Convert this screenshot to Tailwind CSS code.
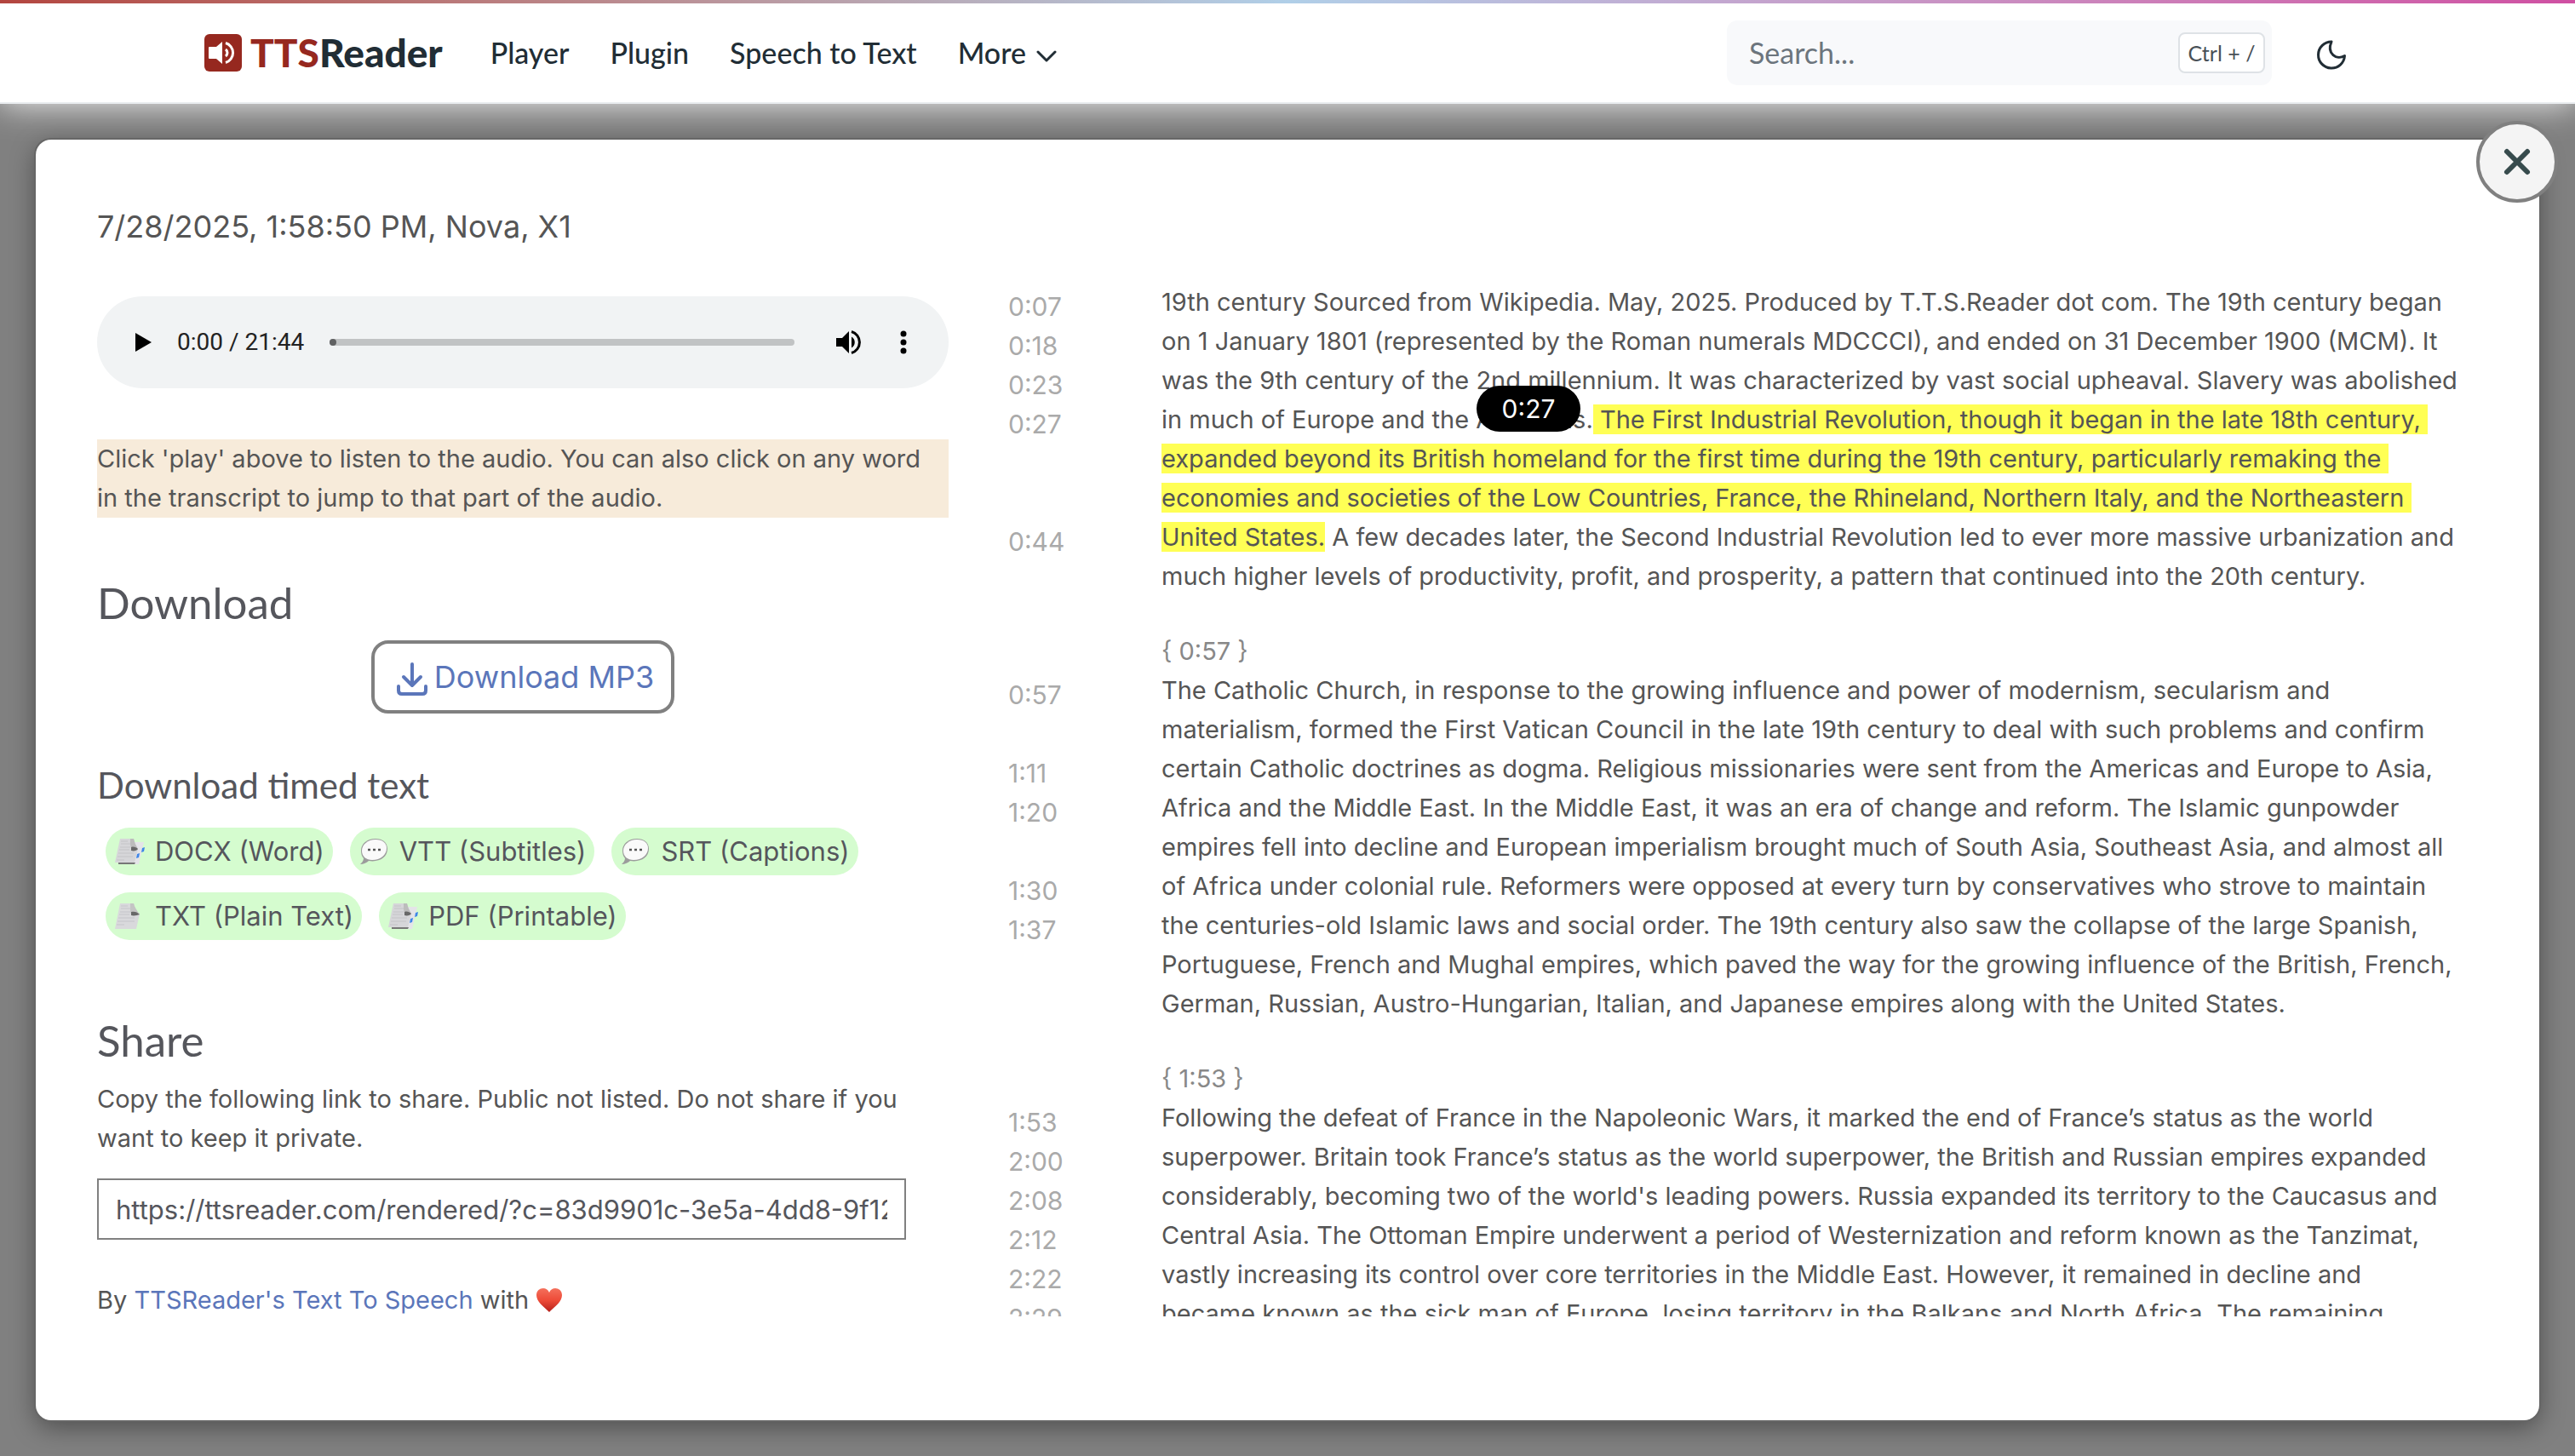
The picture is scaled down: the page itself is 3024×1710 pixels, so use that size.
<!DOCTYPE html>
<html lang="en">
<head>
    <meta charset="UTF-8">
    <meta name="viewport" content="width=device-width, initial-scale=1.0">
    <title>TTSReader</title>
    <script src="https://cdn.jsdelivr.net/npm/@tailwindcss/browser@4"></script>
</head>
<body class="flex h-screen flex-col overflow-hidden bg-[#808080] font-['Inter',sans-serif] text-[29px] leading-[46px] text-[#555]">
    <svg class="hidden">
        <symbol id="page" viewBox="0 0 36 32">
            <path d="M7 1h16l2 8 5 4-4 18H1L7 1z" fill="#d9d9dc"/>
            <path d="M8 4h8M8 7h12M7 11h12M6 14h12M5 18h19M4 22h20M3 26h9" stroke="#c6c6ca" stroke-width="1.2"/>
            <path d="M19 1h4c1 4 3 7 7 13-4-2-7-1-10 0l-1-4z" fill="#c4c4c4"/>
            <path d="M20 11c4-1 7 0 10 3-3 1-7 2-10 1z" fill="#686868"/>
        </symbol>
        <symbol id="pages" viewBox="0 0 36 32">
            <path d="M14 5h21l-6 26H5l9-26z" fill="#e4e4e8"/>
            <path d="M33 12l3-1-1 5-3 1zM27 19l3-1-1 5-3 1z" fill="#3f86e8"/>
            <path d="M5 29h20l-1 2H5z" fill="#777"/>
            <path d="M7 1h16l2 8 3 4-4 16H1L7 1z" fill="#d6d6d9"/>
            <path d="M8 4h8M8 7h12M7 11h12M6 14h12M5 18h18M4 22h18M3 26h9" stroke="#c4c4c8" stroke-width="1.2"/>
            <path d="M19 1h4c1 4 2 7 5 12-3-2-6-2-8-1l-1-4z" fill="#bcbcbc"/>
            <path d="M20 11c3-1 6 0 8 2-1 2-5 3-8 2z" fill="#686868"/>
        </symbol>
        <symbol id="bubble" viewBox="0 0 36 32">
            <path d="M20 1C10 1 3 7 3 15c0 4 1 7 3 9 0 3-2 5-4 7 4 0 8-2 10-4 12 2 22-4 22-14C34 5 28 1 20 1z" fill="#9c9c9c"/>
            <path d="M20 2C11 2 4 8 4 15c0 7 5 11 12 11 10 0 17-6 17-14C33 6 28 2 20 2z" fill="#fafafa"/>
            <path d="M11 14h3M17 14h3M23 14h3" stroke="#555" stroke-width="2.4"/>
        </symbol>
    </svg>

    <header class="relative z-10 h-[122px] shrink-0 border-b-2 border-[#e9ecef] bg-white shadow-[0_0_36px_rgba(255,255,255,0.9)]">
        <div class="h-1 bg-linear-to-r from-[#b3453f] via-[#b0cfe8] to-[#cf4fa2]"></div>
        <div class="flex h-[116px] items-center px-60 font-['Lato',sans-serif] text-[#212d35]">
            <a href="#" class="flex items-center gap-[10px] text-[46px] font-black">
                <svg class="size-11" viewBox="0 0 44 44">
                    <rect width="44" height="44" rx="6" fill="#96281f"/>
                    <path d="M5 16q0-1 1-1h8l7-6v26l-7-6H6q-1 0-1-1z" fill="#fff"/>
                    <path d="M25 18a5 5 0 0 1 0 8M25 10.500a12 12 0 0 1 0 23" fill="none" stroke="#fff" stroke-width="3"/>
                </svg>
                <span><span class="text-[#96281f]">TTS</span>Reader</span>
            </a>
            <nav class="ml-14 flex items-center gap-12 text-[34px] font-medium">
                <a href="#">Player</a>
                <a href="#">Plugin</a>
                <a href="#">Speech to Text</a>
                <a href="#" class="flex items-center gap-3">More
                    <svg class="mt-2 h-4 w-6" viewBox="0 0 24 16" fill="none" stroke="currentColor" stroke-width="3" stroke-linecap="round" stroke-linejoin="round"><path d="M2 3l10 10L22 3"/></svg>
                </a>
            </nav>
            <div class="ml-auto flex h-[76px] w-[640px] items-center rounded-xl bg-[#f8f9fb] pr-2">
                <input type="search" aria-label="Search" placeholder="Search..." class="min-w-0 flex-1 bg-transparent pl-[26px] text-[34px] outline-none placeholder:text-[#6c757d]">
                <kbd class="flex h-12 w-[102px] items-center justify-center rounded-lg border-2 border-[#dee2e6] bg-white font-['Lato',sans-serif] text-[25px] text-[#495057]">Ctrl + /</kbd>
            </div>
            <button type="button" aria-label="Toggle dark mode" class="mt-1 mr-7 ml-[52px]">
                <svg class="size-9" viewBox="0 0 36 36" fill="none" stroke="currentColor" stroke-width="3" stroke-linejoin="round"><path d="M18 3A15.500 15.500 0 1 0 33.500 19.500C24 25 12 17 18 3z"/></svg>
            </button>
        </div>
    </header>

    <main class="flex min-h-0 flex-1 p-[42px]">
        <section class="relative flex min-h-0 flex-1 flex-col rounded-[18px] bg-white px-[72px] pt-[72px] pb-[122px] shadow-[0_0_0_2px_#666,0_8px_30px_rgba(0,0,0,0.4)]">
            <button type="button" aria-label="Close" class="absolute -top-[22px] -right-[22px] z-20 flex size-24 items-center justify-center rounded-full border-4 border-[#808080] bg-[#f4f4f4]">
                <svg class="size-9" viewBox="0 0 36 36" stroke="#374b4d" stroke-width="6" stroke-linecap="round"><path d="M6 6l24 24M30 6L6 30"/></svg>
            </button>
            <h1 class="text-[36px] leading-[60px]">7/28/2025, 1:58:50 PM, Nova, X1</h1>

            <div class="mt-9 grid min-h-0 flex-1 grid-cols-[1000px_180px_1fr] grid-rows-[100%]">
                <div class="pt-4">
                    <div class="flex h-[108px] items-center rounded-full bg-[#f1f3f4] font-['Roboto',sans-serif] text-[28px] text-[#222]">
                        <button type="button" aria-label="Play" class="ml-[45px]">
                            <svg class="h-6 w-5" viewBox="0 0 20 24"><path d="M0 1l19 11L0 23z" fill="#000"/></svg>
                        </button>
                        <span class="ml-[29px]">0:00 / 21:44</span>
                        <input type="range" aria-label="Position" value="0" class="ml-[30px] h-2 w-[546px] appearance-none rounded-full bg-[#c1c3c4] [&::-webkit-slider-thumb]:size-2 [&::-webkit-slider-thumb]:appearance-none [&::-webkit-slider-thumb]:rounded-full [&::-webkit-slider-thumb]:bg-[#606162]">
                        <button type="button" aria-label="Mute" class="ml-12">
                            <svg class="h-8 w-8" viewBox="0 0 32 32"><path d="M1 11v10h7l8 8V3l-8 8z" fill="#000"/><path d="M19 9.500a7.500 7.500 0 0 1 0 13z" fill="#000"/><path d="M19 3.500a13 13 0 0 1 0 25" fill="none" stroke="#000" stroke-width="3"/></svg>
                        </button>
                        <button type="button" aria-label="More options" class="ml-11">
                            <svg class="h-8 w-2" viewBox="0 0 8 32"><circle cx="4" cy="6" r="3.500"/><circle cx="4" cy="16" r="3.500"/><circle cx="4" cy="26" r="3.500"/></svg>
                        </button>
                    </div>
                    <p class="mt-[60px] bg-[#f7ebda]">Click 'play' above to listen to the audio. You can also click on any word<br>in the transcript to jump to that part of the audio.</p>

                    <h2 class="mt-[70px] font-['Lato',sans-serif] text-[51px] leading-[60px] text-[#55565c]">Download</h2>
                    <div class="mt-[14px] flex justify-center">
                        <a href="#" class="flex h-[86px] items-center gap-2 rounded-[20px] border-4 border-[#808080] pr-5 pl-[26px] text-[36px] text-[#5b76ba]">
                            <svg class="mt-1 h-10 w-9" viewBox="0 0 36 40" fill="none" stroke="currentColor" stroke-width="4" stroke-linecap="round" stroke-linejoin="round"><path d="M18 3v24M8 18l10 10 10-10M2 29v5q0 4 4 4h24q4 0 4-4v-5"/></svg>
                            Download MP3
                        </a>
                    </div>

                    <h3 class="mt-[54px] font-['Lato',sans-serif] text-[42px] leading-[60px] text-[#55565c]">Download timed text</h3>
                    <div class="mt-5 flex flex-wrap gap-5 px-[10px] text-[31px] text-[#55565c]">
                        <button type="button" class="flex h-14 items-center gap-3 rounded-full bg-[#d5fccf] px-[10px]"><svg class="h-8 w-9"><use href="#pages"/></svg>DOCX (Word)</button>
                        <button type="button" class="flex h-14 items-center gap-3 rounded-full bg-[#d5fccf] px-[10px]"><svg class="h-8 w-9"><use href="#bubble"/></svg>VTT (Subtitles)</button>
                        <button type="button" class="flex h-14 items-center gap-3 rounded-full bg-[#d5fccf] px-[10px]"><svg class="h-8 w-9"><use href="#bubble"/></svg>SRT (Captions)</button>
                        <button type="button" class="flex h-14 items-center gap-3 rounded-full bg-[#d5fccf] px-[10px]"><svg class="h-8 w-9"><use href="#page"/></svg>TXT (Plain Text)</button>
                        <button type="button" class="flex h-14 items-center gap-3 rounded-full bg-[#d5fccf] px-[10px]"><svg class="h-8 w-9"><use href="#pages"/></svg>PDF (Printable)</button>
                    </div>

                    <h2 class="mt-[88px] font-['Lato',sans-serif] text-[51px] leading-[60px] text-[#55565c]">Share</h2>
                    <label for="link" class="mt-4 block">Copy the following link to share. Public not listed. Do not share if you<br>want to keep it private.</label>
                    <input id="link" type="text" readonly value="https://ttsreader.com/rendered/?c=83d9901c-3e5a-4dd8-9f12-7b1e" class="mt-6 block h-[72px] w-[950px] border-2 border-[#808080] px-5 text-[31px] text-[#55565c]">
                    <p class="mt-12 flex items-center">By&nbsp;<a href="#" class="text-[#5b76ba]">TTSReader's Text To Speech</a>&nbsp;with
                        <svg class="ml-2 size-8" viewBox="0 0 32 32">
                            <defs><linearGradient id="heart" x2="0" y2="1"><stop offset="0" stop-color="#f4705c"/><stop offset="0.500" stop-color="#ee4b38"/><stop offset="1" stop-color="#b5201a"/></linearGradient></defs>
                            <path d="M16 30C10 24 1 18 1 10c0-9 12-11 15-3 3-8 15-6 15 3 0 8-9 14-15 20z" fill="url(#heart)"/>
                        </svg>
                    </p>
                </div>

                <div class="overflow-hidden pt-[5px] pl-[70px] text-[30px] text-[#aaa]">
                    <p>0:07<br>0:18<br>0:23<br>0:27<br><br><br>0:44</p>
                    <p class="mt-[134px]">0:57<br><br>1:11<br>1:20<br><br>1:30<br>1:37</p>
                    <p class="mt-[180px]">1:53<br>2:00<br>2:08<br>2:12<br>2:22<br>2:29</p>
                </div>

                <div class="relative overflow-hidden pl-[70px] whitespace-nowrap">
                    <p>19th century Sourced from Wikipedia. May, 2025. Produced by T.T.S.Reader dot com. The 19th century began<br>
                    on 1 January 1801 (represented by the Roman numerals MDCCCI), and ended on 31 December 1900 (MCM). It<br>
                    was the 9th century of the 2nd millennium. It was characterized by vast social upheaval. Slavery was abolished<br>
                    in much of Europe and the Americas.<mark class="bg-[#ffff55] text-inherit">&nbsp;The First Industrial Revolution, though it began in the late 18th century,&nbsp;<br>
                    expanded beyond its British homeland for the first time during the 19th century, particularly remaking the&nbsp;<br>
                    economies and societies of the Low Countries, France, the Rhineland, Northern Italy, and the Northeastern&nbsp;<br>
                    United States.</mark> A few decades later, the Second Industrial Revolution led to ever more massive urbanization and<br>
                    much higher levels of productivity, profit, and prosperity, a pattern that continued into the 20th century.</p>

                    <p class="mt-[42px] text-[#888]">{ 0:57 }</p>
                    <p>The Catholic Church, in response to the growing influence and power of modernism, secularism and<br>
                    materialism, formed the First Vatican Council in the late 19th century to deal with such problems and confirm<br>
                    certain Catholic doctrines as dogma. Religious missionaries were sent from the Americas and Europe to Asia,<br>
                    Africa and the Middle East. In the Middle East, it was an era of change and reform. The Islamic gunpowder<br>
                    empires fell into decline and European imperialism brought much of South Asia, Southeast Asia, and almost all<br>
                    of Africa under colonial rule. Reformers were opposed at every turn by conservatives who strove to maintain<br>
                    the centuries-old Islamic laws and social order. The 19th century also saw the collapse of the large Spanish,<br>
                    Portuguese, French and Mughal empires, which paved the way for the growing influence of the British, French,<br>
                    German, Russian, Austro-Hungarian, Italian, and Japanese empires along with the United States.</p>

                    <p class="mt-[42px] text-[#888]">{ 1:53 }</p>
                    <p>Following the defeat of France in the Napoleonic Wars, it marked the end of France’s status as the world<br>
                    superpower. Britain took France’s status as the world superpower, the British and Russian empires expanded<br>
                    considerably, becoming two of the world's leading powers. Russia expanded its territory to the Caucasus and<br>
                    Central Asia. The Ottoman Empire underwent a period of Westernization and reform known as the Tanzimat,<br>
                    vastly increasing its control over core territories in the Middle East. However, it remained in decline and<br>
                    became known as the sick man of Europe, losing territory in the Balkans and North Africa. The remaining</p>

                    <div role="tooltip" class="absolute top-[121px] left-[440px] flex h-[54px] w-[122px] items-center justify-center rounded-full bg-black text-[30px] text-white">0:27</div>
                </div>
            </div>
        </section>
    </main>
</body>
</html>
